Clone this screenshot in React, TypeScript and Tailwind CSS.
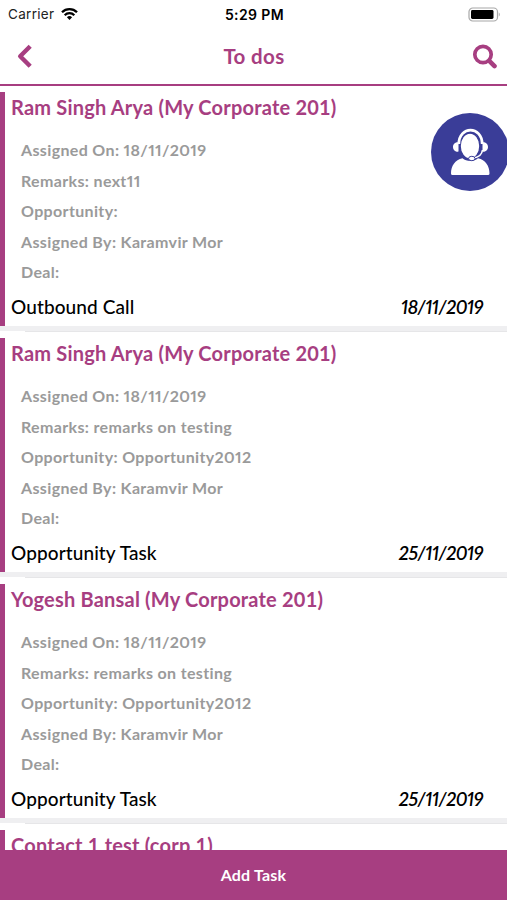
import { clsx } from "clsx";

interface Task {
  contact: string;
  details?: string[];
  type?: string;
  dueDate?: string;
}

const tasks: Task[] = [
  {
    contact: "Ram Singh Arya (My Corporate 201)",
    details: [
      "Assigned On: 18/11/2019",
      "Remarks: next11",
      "Opportunity:",
      "Assigned By: Karamvir Mor",
      "Deal:",
    ],
    type: "Outbound Call",
    dueDate: "18/11/2019",
  },
  {
    contact: "Ram Singh Arya (My Corporate 201)",
    details: [
      "Assigned On: 18/11/2019",
      "Remarks: remarks on testing",
      "Opportunity: Opportunity2012",
      "Assigned By: Karamvir Mor",
      "Deal:",
    ],
    type: "Opportunity Task",
    dueDate: "25/11/2019",
  },
  {
    contact: "Yogesh Bansal (My Corporate 201)",
    details: [
      "Assigned On: 18/11/2019",
      "Remarks: remarks on testing",
      "Opportunity: Opportunity2012",
      "Assigned By: Karamvir Mor",
      "Deal:",
    ],
    type: "Opportunity Task",
    dueDate: "25/11/2019",
  },
  { contact: "Contact 1 test (corp 1)" },
];

function StatusBar() {
  return (
    <div className="grid h-7 shrink-0 grid-cols-3 items-center pl-[8px] pr-[6px] font-['Inter',sans-serif] text-black">
      <div className="flex items-center gap-[7px]">
        <span className="text-[13.5px] tracking-[0.3px] text-[#222]">Carrier</span>
        <svg width="17" height="12" viewBox="0 0 17 12" fill="none" stroke="#000" strokeWidth="2.3">
          <path d="M1 4.3a10.6 10.6 0 0 1 15 0" />
          <path d="M3.7 7.2a6.8 6.8 0 0 1 9.6 0" />
          <path d="M8.5 11.9 5.9 9.3a3.7 3.7 0 0 1 5.2 0z" fill="#000" stroke="none" />
        </svg>
      </div>
      <span className="text-center text-[14px] font-semibold tracking-[0.4px]">5:29 PM</span>
      <svg className="justify-self-end" width="33" height="15" viewBox="0 0 33 15">
        <rect x="1" y="1" width="28.5" height="13" rx="3.8" fill="#fff" stroke="#a8a8a8" strokeWidth="1.2" />
        <rect x="3" y="3" width="22.5" height="9" rx="1.4" fill="#000" />
        <path d="M30.8 5.5c1.2.4 1.2 3.6 0 4z" fill="#a0a0a0" />
      </svg>
    </div>
  );
}

function Header() {
  return (
    <header className="flex h-[58px] shrink-0 items-center justify-between border-b-2 border-[#a73e81] pl-[17px] pr-[9px]">
      <button aria-label="Back">
        <svg
          width="16"
          height="24"
          viewBox="0 0 16 24"
          fill="none"
          stroke="#a73e81"
          strokeWidth="4.4"
          strokeLinejoin="round"
        >
          <path d="M13.2 2.3 3.2 12.3l10 10" />
        </svg>
      </button>
      <h1 className="pl-[3px] text-[20.5px] font-bold tracking-[0.35px] text-[#a73e81]">To dos</h1>
      <button aria-label="Search">
        <svg width="26" height="25" viewBox="0 0 26 25" fill="none" stroke="#a73e81" strokeLinecap="round">
          <circle cx="11" cy="10.5" r="8.2" strokeWidth="3.7" />
          <path d="m17.5 17.2 5 4.9" strokeWidth="4.6" />
        </svg>
      </button>
    </header>
  );
}

function TaskCard({ task }: { task: Task }) {
  return (
    <article className="h-[246px] shrink-0">
      <div className="flex h-[234px] flex-col border-l-[5px] border-[#a73e81] pl-[6px]">
        <h2 className="h-[43px] whitespace-nowrap text-[20px] font-bold leading-[30px] tracking-[0.2px] text-[#a73e81]">
          {task.contact}
        </h2>
        {task.details && (
          <ul className="pl-[10px] text-[16px] font-bold proportional-nums tracking-[0.35px] text-[#9a9a9a]">
            {task.details.map((line) => (
              <li key={line} className="h-[30.6px] leading-[30px]">
                {line}
              </li>
            ))}
          </ul>
        )}
        {task.type && (
          <div className="flex justify-between pr-[24px] text-[19px] font-medium leading-[37px] text-black">
            <span className="tracking-[0.1px]">{task.type}</span>
            <span className="font-semibold italic proportional-nums tracking-[-0.5px]">{task.dueDate}</span>
          </div>
        )}
      </div>
      <div className="h-[5px] bg-[#efeff1]" />
      <div className="ml-[25px] h-px bg-[#e6e6e8]" />
    </article>
  );
}

function SupportButton() {
  return (
    <button aria-label="Support" className="absolute left-[431px] top-[113px]">
      <svg width="78" height="78" viewBox="0 0 78 78">
        <circle cx="39" cy="39" r="39" fill="#3a3d98" />
        <path
          d="M20 60.5c0-7.500 4-13.500 11.500-15.200 4 3.600 11.500 3.600 15.500 0C54.500 47 58.500 53 58.500 60.500q0 1.500-1.500 1.500H21.500q-1.500 0-1.500-1.500z"
          fill="#fff"
        />
        <ellipse cx="39" cy="33" rx="9.800" ry="12.800" fill="#fff" stroke="#3a3d98" strokeWidth="1.200" />
        <path d="M27.800 31C28 12.500 51 12.500 51.200 31" fill="none" stroke="#fff" strokeWidth="2.800" />
        <path
          d="M27.500 29.300v9.300c-3 .3-5.500-1.700-5.500-4.700s2.500-4.900 5.500-4.600zM51.500 29.300v9.300c3 .3 5.500-1.700 5.500-4.700s-2.500-4.900-5.500-4.600z"
          fill="#fff"
        />
        <path d="M51.500 37c-.6 5-4.500 7.500-9.500 8.200" fill="none" stroke="#fff" strokeWidth="1.600" />
        <ellipse cx="40.800" cy="45.500" rx="3.200" ry="2.200" fill="#fff" stroke="#3a3d98" strokeWidth="1" />
      </svg>
    </button>
  );
}

export default function App() {
  return (
    <div
      className={clsx(
        "relative flex h-[900px] w-[507px] flex-col overflow-hidden bg-white",
        "font-['Lato',sans-serif]"
      )}
    >
      <StatusBar />
      <Header />
      <main className="flex min-h-0 flex-1 flex-col overflow-hidden pt-[6px]">
        {tasks.map((task, i) => (
          <TaskCard key={i} task={task} />
        ))}
      </main>
      <button className="h-[50px] shrink-0 bg-[#a73e81] pb-px text-[16px] font-bold tracking-[0.2px] text-white">
        Add Task
      </button>
      <SupportButton />
    </div>
  );
}
